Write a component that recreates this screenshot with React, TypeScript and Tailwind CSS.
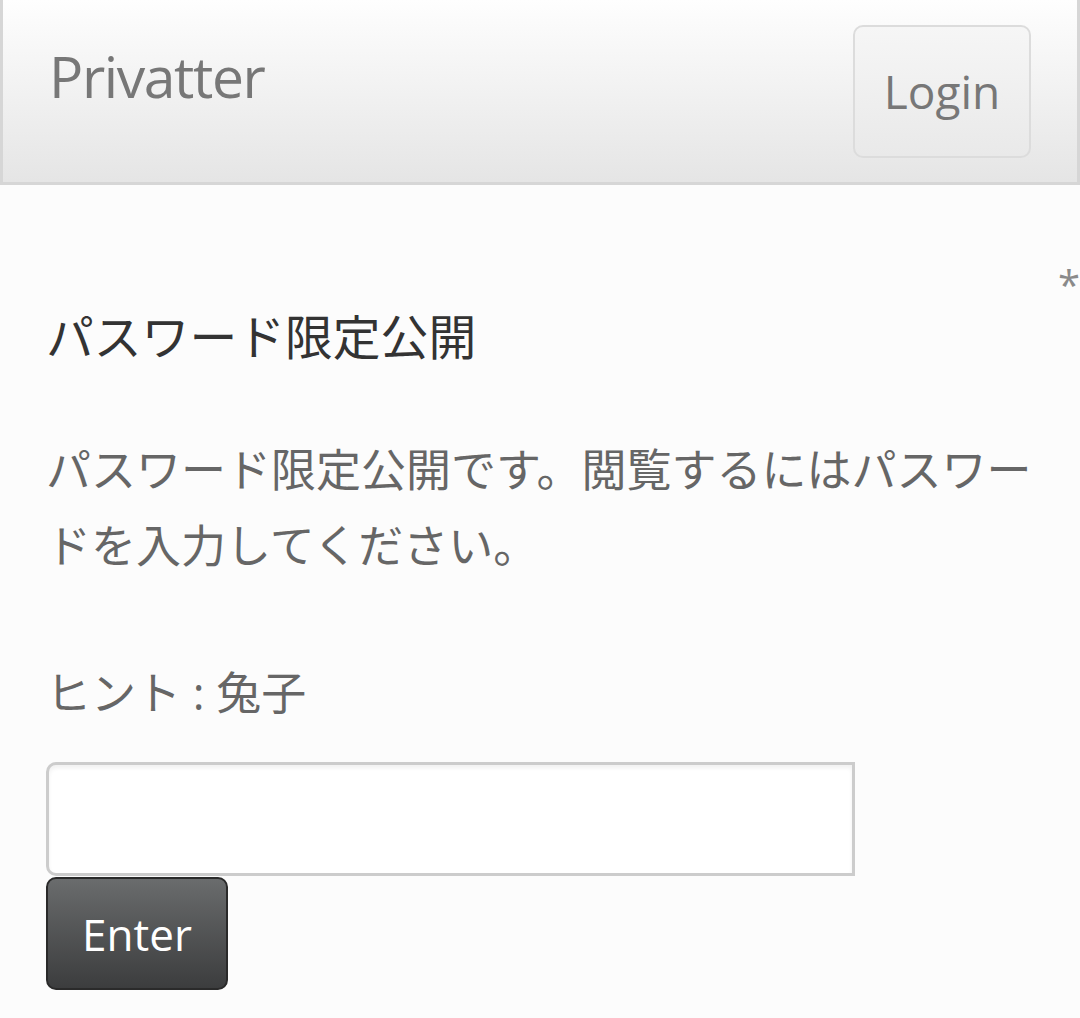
import React from "react";

export default function App() {
  return (
    <div
      className="min-h-[1018px] w-[1080px] bg-[#fcfcfc]"
      style={{ fontFamily: '"Open Sans", "Noto Sans CJK JP", sans-serif' }}
    >
      <header className="flex h-[185px] items-start justify-between border-x-[3px] border-b-[3px] border-[#d6d6d6] bg-gradient-to-b from-[#fefefe] to-[#e5e5e5] pl-[46px] pr-[46px]">
        <div className="mt-[48px] text-[57px] leading-[57px] tracking-[-1.4px] text-[#777777]">Privatter</div>
        <button className="mt-[25px] flex h-[133px] w-[178px] items-center justify-center rounded-[10px] border-2 border-[#dcdcdc] bg-gradient-to-b from-[#f6f6f6] to-[#e9e9e9] text-[46px] text-[#777777]">
          Login
        </button>
      </header>

      <main className="pl-[46px] pr-[30px]">
        <div className="-mr-[30px] flex justify-end pt-[80px] text-[40px] leading-[40px] text-[#8a8a8a]">*</div>
        <h1 className="mt-[6px] text-[47.8px] leading-[52px] text-[#333333]">パスワード限定公開</h1>
        <p className="mt-[69px] text-[45px] leading-[76px] text-[#666666]">
          パスワード限定公開です。閲覧するにはパスワードを入力してください。
        </p>
        <p className="mt-[71px] text-[45px] leading-[76px] text-[#666666]">ヒント : 兔子</p>
        <form className="mt-[31px] flex flex-col items-start" onSubmit={(e) => e.preventDefault()}>
          <input
            type="password"
            className="h-[114px] w-[809px] rounded-l-[10px] border-[3px] border-[#cccccc] bg-white shadow-[inset_0_3px_4px_rgba(0,0,0,0.06)] outline-none"
          />
          <button className="mt-[1px] flex h-[113px] w-[182px] items-center justify-center rounded-[10px] border-2 border-[#2a2a2a] bg-gradient-to-b from-[#6a6c6d] to-[#3c3d3e] text-[44px] text-white">
            Enter
          </button>
        </form>
      </main>
    </div>
  );
}
